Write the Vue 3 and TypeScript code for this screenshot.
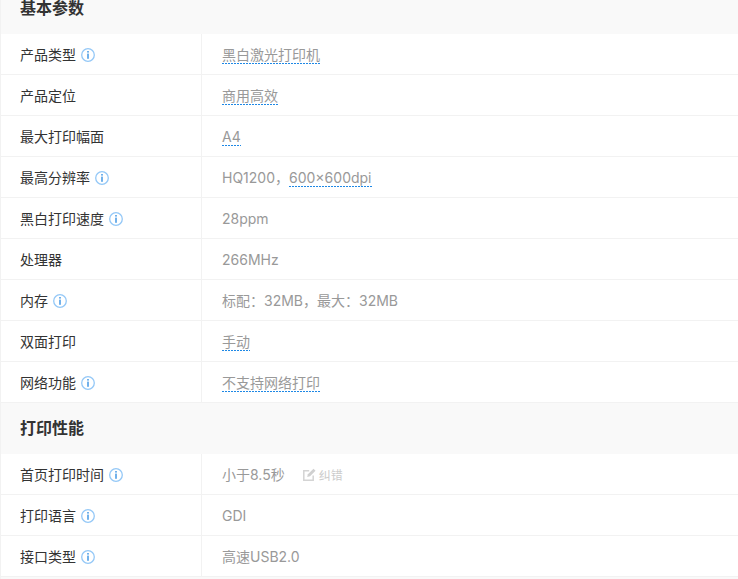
<script setup lang="ts">
type Part = { text: string; dotted?: boolean }
type Row = { label: string; info?: boolean; parts: Part[]; fix?: boolean }
type Section = { title: string; rows: Row[] }

const sections: Section[] = [
  {
    title: '基本参数',
    rows: [
      { label: '产品类型', info: true, parts: [{ text: '黑白激光打印机', dotted: true }] },
      { label: '产品定位', parts: [{ text: '商用高效', dotted: true }] },
      { label: '最大打印幅面', parts: [{ text: 'A4', dotted: true }] },
      { label: '最高分辨率', info: true, parts: [{ text: 'HQ1200，' }, { text: '600×600dpi', dotted: true }] },
      { label: '黑白打印速度', info: true, parts: [{ text: '28ppm' }] },
      { label: '处理器', parts: [{ text: '266MHz' }] },
      { label: '内存', info: true, parts: [{ text: '标配：32MB，最大：32MB' }] },
      { label: '双面打印', parts: [{ text: '手动', dotted: true }] },
      { label: '网络功能', info: true, parts: [{ text: '不支持网络打印', dotted: true }] },
    ],
  },
  {
    title: '打印性能',
    rows: [
      { label: '首页打印时间', info: true, parts: [{ text: '小于8.5秒' }], fix: true },
      { label: '打印语言', info: true, parts: [{ text: 'GDI' }] },
      { label: '接口类型', info: true, parts: [{ text: '高速USB2.0' }] },
    ],
  },
]
</script>

<template>
  <div class="page">
    <section v-for="s in sections" :key="s.title">
      <h2 class="head">{{ s.title }}</h2>
      <div v-for="r in s.rows" :key="r.label" class="row">
        <div class="label">
          <span>{{ r.label }}</span>
          <svg v-if="r.info" class="info" width="14" height="14" viewBox="0 0 14 14">
            <circle cx="7" cy="7" r="6.3" fill="none" stroke="#94c8f7" stroke-width="1.3" />
            <rect x="6.2" y="3" width="1.6" height="1.6" fill="#4f9fe6" />
            <rect x="6.2" y="5.6" width="1.6" height="5.2" fill="#4f9fe6" />
          </svg>
        </div>
        <div class="value">
          <span v-for="(p, i) in r.parts" :key="i" :class="{ dotted: p.dotted }">{{ p.text }}</span>
          <span v-if="r.fix" class="fix">
            <svg width="13" height="13" viewBox="0 0 13 13">
              <path d="M10.2 7.5V12.2H.8V2.8h5.4" fill="none" stroke="#d4d4d4" stroke-width="1.5" />
              <path d="M4.2 9l.7-2.8L10.5.8l2 2-5.5 5.5z" fill="#d0d0d0" />
            </svg>
            <span>纠错</span>
          </span>
        </div>
      </div>
    </section>
    <div class="tail"></div>
  </div>
</template>

<style>
html, body {
  margin: 0;
  background: #fff;
  overflow: hidden;
}
</style>

<style scoped>
.page {
  width: 738px;
  height: 596px;
  margin-top: -17px;
  box-sizing: border-box;
  border-left: 1px solid #f2f2f2;
  font-family: Inter, "Noto Sans CJK SC", sans-serif;
  font-size: 14px;
  color: #333;
}
.head {
  margin: 0;
  height: 51px;
  padding-left: 19px;
  background: #f9f9f9;
  font-size: 16px;
  font-weight: 700;
  line-height: 50px;
  color: #333;
}
.row {
  display: flex;
  height: 41px;
  box-sizing: border-box;
  border-bottom: 1px solid #f2f2f2;
}
.label {
  width: 201px;
  flex: none;
  box-sizing: border-box;
  padding: 1px 0 0 19px;
  display: flex;
  align-items: center;
  gap: 5px;
  border-right: 1px solid #f2f2f2;
  line-height: 20px;
}
.value {
  padding-left: 20px;
  display: flex;
  align-items: center;
  color: #999;
  white-space: pre;
}
.dotted {
  line-height: 21px;
  height: 20px;
  background: repeating-linear-gradient(90deg, #1e88e5 0 2px, transparent 2px 3px) left bottom / 100% 1px no-repeat;
}
.fix {
  display: flex;
  align-items: center;
  gap: 3px;
  margin-left: 18px;
  color: #ccc;
  font-size: 12px;
}
.tail {
  height: 30px;
  background: #f9f9f9;
}
</style>
